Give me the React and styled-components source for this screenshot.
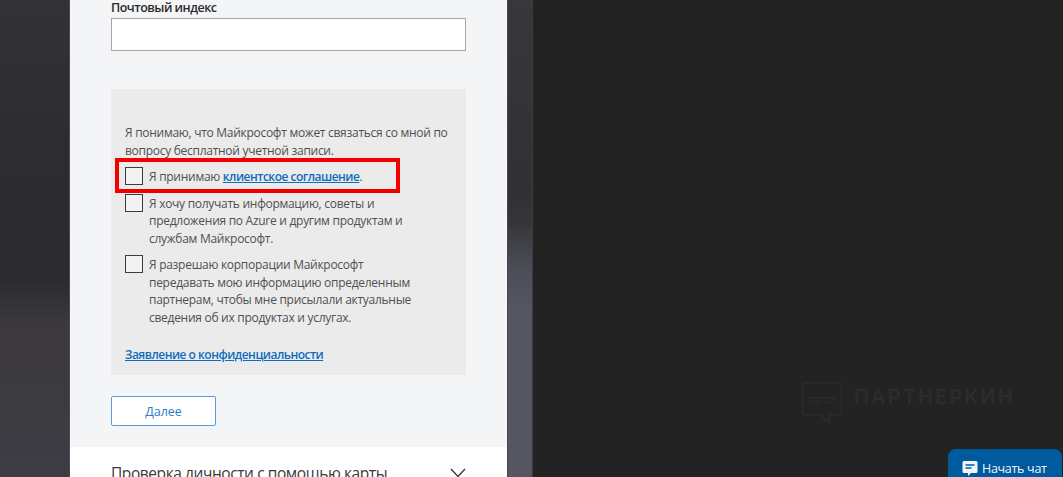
import React from "react";
import styled, { createGlobalStyle } from "styled-components";

const GlobalStyle = createGlobalStyle`
  html, body {
    margin: 0;
    padding: 0;
    height: 100%;
    background: #232323;
  }
  body {
    font-family: "Open Sans", "Noto Sans", sans-serif;
  }
`;

const Screen = styled.div`
  position: relative;
  display: flex;
  width: 1063px;
  height: 477px;
  overflow: hidden;
`;

const LeftStrip = styled.div`
  width: 70px;
  flex: none;
  box-sizing: border-box;
  border-right: 1px solid #4a4a4e;
  background: linear-gradient(
    180deg,
    #333236 0,
    #2d2c30 30%,
    #2b2a2d 58%,
    #3b393e 68%,
    #3e3d43 100%
  );
`;

const RightStrip = styled.div`
  width: 26px;
  flex: none;
  box-sizing: border-box;
  border-left: 1px solid #47474c;
  border-right: 1px solid #3a3a40;
  background: linear-gradient(
    180deg,
    #37373c 0,
    #303035 40%,
    #36363a 47%,
    #4d4d57 56%,
    #565660 65%,
    #565660 100%
  );
`;

const DarkSide = styled.div`
  flex: 1;
  background: #232323;
`;

const Card = styled.div`
  width: 437px;
  flex: none;
  height: 100%;
  background: #f3f5f7;
  display: flex;
  flex-direction: column;
`;

const FormPart = styled.div`
  height: 447px;
  flex: none;
  padding: 0 41px;
  box-sizing: border-box;
`;

const FieldLabel = styled.div`
  font-size: 12.5px;
  font-weight: 600;
  letter-spacing: -0.5px;
  line-height: 14px;
  color: #2a2a2a;
  height: 18px;
  padding-top: 1px;
  box-sizing: border-box;
`;

const TextInput = styled.div`
  height: 33px;
  box-sizing: border-box;
  background: #fff;
  border: 1px solid #a6a6a6;
`;

const ConsentBox = styled.div`
  margin-top: 38px;
  height: 286px;
  box-sizing: border-box;
  background: #ebebeb;
  padding: 35px 14px 0;
  color: #505050;
  font-size: 12px;
  letter-spacing: -0.28px;
  line-height: 17.5px;
`;

const Intro = styled.p`
  margin: 0 0 8px;
`;

const CheckRow = styled.div`
  display: flex;
  gap: 6px;
  margin-bottom: 8px;
`;

const CheckSquare = styled.span`
  width: 18px;
  height: 18px;
  flex: none;
  box-sizing: border-box;
  border: 1.5px solid #3c3c3c;
  background: #f2f2f2;
`;

const CheckText = styled.span`
  width: 276px;
  padding-top: 1px;
`;

const Anchor = styled.a`
  color: #0f6cbd;
  text-decoration: underline;
  font-weight: 600;
  letter-spacing: -0.5px;
`;

const PrivacyLine = styled.div`
  margin-top: 20px;
`;

const NextButton = styled.button`
  display: block;
  width: 105px;
  height: 30px;
  margin-top: 21px;
  padding: 0;
  background: #fff;
  border: 1px solid #5a9bd5;
  border-radius: 2px;
  color: #2f7cc4;
  font-family: inherit;
  font-size: 12.5px;
`;

const Accordion = styled.div`
  flex: 1;
  background: #fff;
  display: flex;
  justify-content: space-between;
  padding: 16px 41px 0;
  color: #3a3a3a;
  font-size: 15.5px;
  letter-spacing: -0.42px;
  line-height: 20px;
  white-space: nowrap;
`;

const Chevron = styled.svg`
  width: 16px;
  height: 10px;
  margin-top: 5px;
`;

const RedFrame = styled.div`
  position: absolute;
  left: 115px;
  top: 158px;
  width: 285px;
  height: 35px;
  box-sizing: border-box;
  border: 4px solid #f20000;
`;

const Watermark = styled.div`
  position: absolute;
  left: 802px;
  top: 382px;
  display: flex;
  align-items: flex-start;
  gap: 12px;
  color: #2c2c2c;
  font-family: "Inter", "Open Sans", sans-serif;
  font-weight: 600;
  font-size: 20px;
  line-height: 30px;
  letter-spacing: 2.1px;
`;

const ChatButton = styled.div`
  position: absolute;
  left: 948px;
  top: 449px;
  width: 114px;
  height: 40px;
  box-sizing: border-box;
  padding: 11px 0 0 14px;
  display: flex;
  gap: 4px;
  background: #005a9e;
  border-radius: 8px 8px 0 0;
  color: #f0f5fa;
  font-size: 12.5px;
  letter-spacing: -0.3px;
  line-height: 17px;
`;

const ChatIcon = styled.svg`
  width: 16px;
  height: 17px;
  flex: none;
`;

export default function App() {
  return (
    <>
      <GlobalStyle />
      <Screen>
        <LeftStrip />
        <Card>
          <FormPart>
            <FieldLabel>Почтовый индекс</FieldLabel>
            <TextInput />
            <ConsentBox>
              <Intro>
                Я понимаю, что Майкрософт может связаться со мной по вопросу
                бесплатной учетной записи.
              </Intro>
              <CheckRow>
                <CheckSquare />
                <CheckText>
                  Я принимаю <Anchor href="#">клиентское соглашение</Anchor>.
                </CheckText>
              </CheckRow>
              <CheckRow>
                <CheckSquare />
                <CheckText>
                  Я хочу получать информацию, советы и предложения по Azure и
                  другим продуктам и службам Майкрософт.
                </CheckText>
              </CheckRow>
              <CheckRow>
                <CheckSquare />
                <CheckText>
                  Я разрешаю корпорации Майкрософт передавать мою информацию
                  определенным партнерам, чтобы мне присылали актуальные
                  сведения об их продуктах и услугах.
                </CheckText>
              </CheckRow>
              <PrivacyLine>
                <Anchor href="#">Заявление о конфиденциальности</Anchor>
              </PrivacyLine>
            </ConsentBox>
            <NextButton>Далее</NextButton>
          </FormPart>
          <Accordion>
            <span>Проверка личности с помощью карты</span>
            <Chevron viewBox="0 0 16 10" fill="none" stroke="#333" strokeWidth="1.3">
              <path d="M1 1l7 7.5L15 1" />
            </Chevron>
          </Accordion>
        </Card>
        <RightStrip />
        <DarkSide />
        <RedFrame />
        <Watermark>
          <svg width="40" height="42" viewBox="0 0 40 42" fill="none" stroke="#2c2c2c" strokeWidth="1.4">
            <path d="M3 1h34a2 2 0 0 1 2 2v28a2 2 0 0 1-2 2H27v8l-8-8H3a2 2 0 0 1-2-2V3a2 2 0 0 1 2-2z" />
            <path d="M7 16h26M8 16a5 5 0 0 0 10 0M22 16a5 5 0 0 0 10 0" />
          </svg>
          <span>ПАРТНЕРКИН</span>
        </Watermark>
        <ChatButton>
          <ChatIcon viewBox="0 0 16 17">
            <path fill="#f0f5fa" d="M2 1h12a1.5 1.5 0 0 1 1.5 1.5v9A1.5 1.5 0 0 1 14 13H9l-3 3v-3H2a1.5 1.5 0 0 1-1.5-1.5v-9A1.5 1.5 0 0 1 2 1z" />
            <path stroke="#005a9e" strokeWidth="1.4" d="M3.5 5h9M3.5 8h6" />
          </ChatIcon>
          <span>Начать чат</span>
        </ChatButton>
      </Screen>
    </>
  );
}
